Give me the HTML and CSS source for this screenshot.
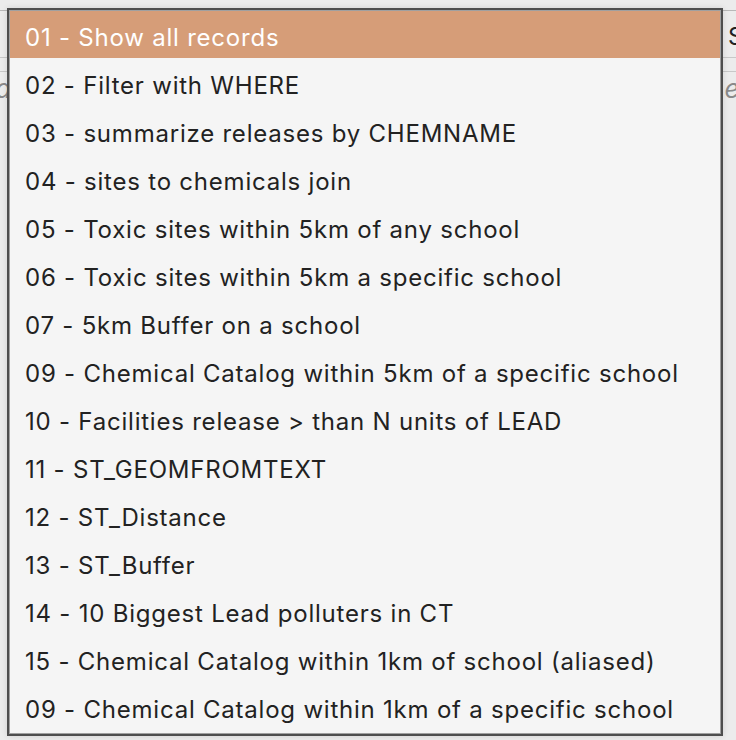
FILE: index.html
```html
<!DOCTYPE html>
<html>
<head>
<meta charset="utf-8">
<link rel="stylesheet" href="styles.css">
</head>
<body>
<div class="page">
  <div class="toolbar">
    <div class="select-box">Select a query</div>
  </div>
  <div class="editor">
    <span class="ph-left">ra</span>
    <span class="ph-right">enter</span>
  </div>
</div>
<ul class="popup">
  <li class="item active">01 - Show all records</li>
  <li class="item">02 - Filter with WHERE</li>
  <li class="item">03 - summarize releases by CHEMNAME</li>
  <li class="item">04 - sites to chemicals join</li>
  <li class="item">05 - Toxic sites within 5km of any school</li>
  <li class="item">06 - Toxic sites within 5km a specific school</li>
  <li class="item">07 - 5km Buffer on a school</li>
  <li class="item">09 - Chemical Catalog within 5km of a specific school</li>
  <li class="item">10 - Facilities release &gt; than N units of LEAD</li>
  <li class="item">11 - ST_GEOMFROMTEXT</li>
  <li class="item">12 - ST_Distance</li>
  <li class="item">13 - ST_Buffer</li>
  <li class="item">14 - 10 Biggest Lead polluters in CT</li>
  <li class="item">15 - Chemical Catalog within 1km of school (aliased)</li>
  <li class="item">09 - Chemical Catalog within 1km of a specific school</li>
</ul>
</body>
</html>
```
FILE: styles.css
```css
html, body {
  margin: 0;
  padding: 0;
}
body {
  width: 736px;
  height: 740px;
  overflow: hidden;
  background: #ececec;
  font-family: Inter, "Liberation Sans", Arial, sans-serif;
  position: relative;
}
.page {
  padding-top: 10px;
}
.toolbar {
  display: flex;
  justify-content: flex-end;
  height: 46px;
  border-top: 1px solid #b8b8b8;
  border-bottom: 1px solid #c8c8c8;
  overflow: hidden;
}
.select-box {
  flex: 0 0 auto;
  margin-right: -150px;
  width: 158px;
  font-size: 24px;
  line-height: 52px;
  color: #222;
  white-space: nowrap;
}
.editor {
  margin-top: 13px;
  border-top: 1px solid #c8c8c8;
  display: flex;
  justify-content: space-between;
  font-style: italic;
  color: #8a8a8a;
  font-size: 26px;
  line-height: 34px;
  overflow: hidden;
  height: 40px;
}
.ph-left {
  margin-left: -14px;
}
.ph-right {
  margin-right: -52px;
}
.popup {
  position: absolute;
  left: 7px;
  top: 8px;
  width: 710px;
  height: 722px;
  margin: 0;
  padding: 1px;
  list-style: none;
  background: #f5f5f5;
  border: 2px solid #4e4e4e;
  box-shadow: inset 0 0 0 1px #a0a0a0, 0 0 6px rgba(0,0,0,0.12);
}
.item {
  height: 48px;
  line-height: 54px;
  padding-left: 15px;
  font-size: 24px;
  letter-spacing: 0.78px;
  color: #222;
  white-space: nowrap;
}
.item.active {
  background: #d69d78;
  color: #fff;
  height: 47px;
  line-height: 54px;
  margin-bottom: 1px;
}
```
